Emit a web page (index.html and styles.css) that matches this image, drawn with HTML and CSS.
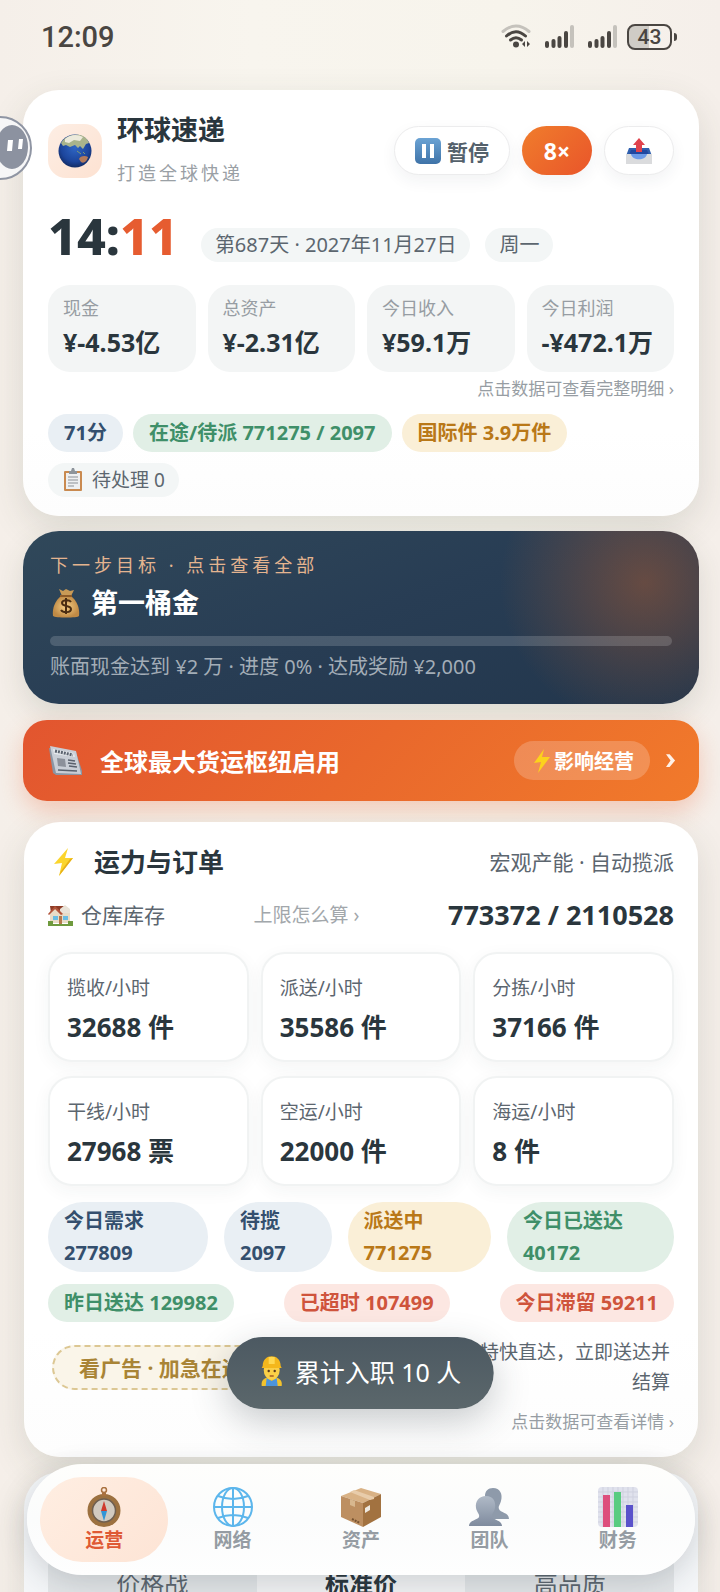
FILE: index.html
```
<!DOCTYPE html>
<html lang="zh-CN">
<head>
    <meta charset="UTF-8">
    <meta name="viewport" content="width=device-width, initial-scale=1.0">
    <title>环球速递</title>
    <link rel="stylesheet" href="styles.css">
</head>
<body>
<div class="app">
    <!-- 状态栏 -->
    <div class="status-bar">
        <span class="status-time">12:09</span>
        <div class="status-icons">
            <svg width="31" height="26" viewBox="0 0 31 26" fill="none" stroke-linecap="round">
                <path d="M2 7.500Q15 -3.500 28 7.500" stroke="#c5c2bc" stroke-width="3"/>
                <path d="M5.500 12Q15 3.500 24.500 12" stroke="#4a4642" stroke-width="3"/>
                <path d="M9.500 16Q15 11.500 20.500 16" stroke="#4a4642" stroke-width="3"/>
                <circle cx="15" cy="20.500" r="3" fill="#4a4642"/>
                <path d="M24 17v6l-3-3zM26 17v6l3-3z" fill="#4a4642"/>
            </svg>
            <svg width="30" height="26" viewBox="0 0 30 26">
                <g fill="#4a4642"><rect y="17" width="4" height="7" rx="2"/><rect x="6.500" y="15" width="4" height="9" rx="2"/><rect x="12.500" y="12" width="4" height="12" rx="2"/><rect x="19" y="7" width="4" height="17" rx="2"/></g>
                <rect x="25" y="1" width="4" height="23" rx="2" fill="#c5c2bc"/>
            </svg>
            <svg width="30" height="26" viewBox="0 0 30 26">
                <g fill="#4a4642"><rect y="17" width="4" height="7" rx="2"/><rect x="6.500" y="15" width="4" height="9" rx="2"/><rect x="12.500" y="12" width="4" height="12" rx="2"/><rect x="19" y="7" width="4" height="17" rx="2"/></g>
                <rect x="25" y="1" width="4" height="23" rx="2" fill="#c5c2bc"/>
            </svg>
            <span class="battery">43</span>
        </div>
    </div>

    <!-- 悬浮助手 -->
    <button class="helper" aria-label="助手">
        <svg width="66" height="66" viewBox="0 0 66 66">
            <circle cx="33" cy="33" r="31" fill="#f6f6f7" stroke="#8f95a3" stroke-width="2"/>
            <ellipse cx="45" cy="32" rx="16" ry="22" fill="#8c92a0"/>
            <path d="M41 25h5l-1 11h-5zM52 24h4l-1 10h-4z" fill="#fff"/>
        </svg>
    </button>

    <!-- 公司概况 -->
    <section class="card">
        <div class="head">
            <div class="logo">
                <svg width="34" height="34" viewBox="0 0 34 34">
                    <defs><radialGradient id="earth" cx=".5" cy=".4" r=".6"><stop offset="0" stop-color="#2f66c4"/><stop offset=".7" stop-color="#1c459c"/><stop offset="1" stop-color="#122c66"/></radialGradient></defs>
                    <circle cx="17" cy="17" r="16.500" fill="url(#earth)"/>
                    <path d="M3 9C7 2 15 0 22 1c5 1 8 5 9 8l-3 1-3 5-3-3-2 2-3-3-5 2-4-2-3 1z" fill="#a9b48c"/>
                    <path d="M7 5c5-5 13-5 18-2l-3 4-6-1-5 3-4-1z" fill="#eceadb"/>
                    <path d="M21 25c1-3 6-4 9-2-1 4-4 7-7 5z" fill="#b27a5c"/>
                    <path d="M19 17l4 3m2-2l2 2" stroke="#7d9a72"/>
                </svg>
            </div>
            <div class="brand">
                <h1>环球速递</h1>
                <p>打造全球快递</p>
            </div>
            <div class="actions">
                <button class="btn btn-pause">
                    <svg width="26" height="26" viewBox="0 0 26 26"><defs><linearGradient id="pause" x2="0" y2="1"><stop stop-color="#6ba3d4"/><stop offset="1" stop-color="#3f73a8"/></linearGradient></defs><rect width="26" height="26" rx="5" fill="url(#pause)"/><path d="M7 6h4v14H7zM15 6h4v14h-4z" fill="#fff"/></svg>
                    暂停
                </button>
                <button class="btn btn-speed">8×</button>
                <button class="btn" aria-label="导出">
                    <svg width="26" height="26" viewBox="0 0 26 26"><path d="M3 10h20l3 8H0z" fill="#2f5fae"/><path d="M5 12h16l2 5H3z" fill="#2148a0"/><path d="M0 16h7c1 4 11 4 12 0h7v10H0z" fill="#dadbdd"/><path d="M5 16h16c-1 7-15 7-16 0z" fill="#6d9be8"/><path d="M13 0l6 7h-3v7h-6V7H7z" fill="#e0434d"/></svg>
                </button>
            </div>
        </div>

        <div class="clock-row">
            <div class="clock">14:<span>11</span></div>
            <span class="tag">第687天 · 2027年11月27日</span>
            <span class="tag">周一</span>
        </div>

        <div class="stats">
            <div class="stat"><span>现金</span><strong>¥-4.53亿</strong></div>
            <div class="stat"><span>总资产</span><strong>¥-2.31亿</strong></div>
            <div class="stat"><span>今日收入</span><strong>¥59.1万</strong></div>
            <div class="stat"><span>今日利润</span><strong>-¥472.1万</strong></div>
        </div>
        <a class="hint" href="#">点击数据可查看完整明细 ›</a>

        <div class="chips">
            <span class="chip blue">71分</span>
            <span class="chip green">在途/待派 771275 / 2097</span>
            <span class="chip yellow">国际件 3.9万件</span>
            <span class="tag todo">
                <svg width="22" height="24" viewBox="0 0 22 24"><rect x="2" y="3" width="18" height="20" rx="1" fill="#c98a50"/><path d="M4 5h14v16H4z" fill="#eef0f2"/><path d="M7 3h2l1-3h2l1 3h2v3H7z" fill="#8d949b"/><path d="M6 9h10M6 12h10M6 15h10M6 18h6" stroke="#8b9096"/></svg>
                待处理 0
            </span>
        </div>
    </section>

    <!-- 下一步目标 -->
    <section class="goal">
        <p class="goal-label">下一步目标 · 点击查看全部</p>
        <h2>
            <svg width="32" height="32" viewBox="0 0 32 32"><defs><radialGradient id="bag"><stop stop-color="#f6cf86"/><stop offset="1" stop-color="#c08a45"/></radialGradient></defs><path d="M9 2l4 2 3-2 4 2 4-1-3 6H12z" fill="#c99a56"/><path d="M11 9h10c6 5 9 12 8 20-1 2-24 2-26 0C2 21 5 14 11 9z" fill="url(#bag)"/><path d="M10 9h12" stroke="#8c5a28" stroke-width="2"/><path d="M21 15c-2-3-9-2-9 1 0 4 9 2 9 6 0 4-8 4-10 1M16 11v16" stroke="#4a2d12" stroke-width="2" fill="none"/></svg>
            第一桶金
        </h2>
        <div class="bar"></div>
        <p class="goal-text">账面现金达到 ¥2 万 · 进度 0% · 达成奖励 ¥2,000</p>
    </section>

    <!-- 新闻 -->
    <section class="news">
        <svg width="34" height="30" viewBox="0 0 34 30"><path d="M0 2l4 25 3 2h26v-4l-6-19z" fill="#8b95a3"/><path d="M1 0l26 5 5 23-25-1z" fill="#c9ced6"/><path d="M4 3l21 4 1 4-21-3z" fill="#e6e9ed"/><path d="M6 5l18 4" stroke="#5c6470" stroke-width="3" stroke-dasharray="2 1"/><path d="M8 12l8 1 1 8-8-1z" fill="#8b909a"/><path d="M19 14l7 1M19 17l8 1M20 20l8 1M9 24l19 1" stroke="#59616d" stroke-width="1.500"/></svg>
        <span class="news-title">全球最大货运枢纽启用</span>
        <span class="impact">
            <svg width="16" height="24" viewBox="0 0 16 24"><path d="M10 0L0 14l7-1-3 11L16 8H8z" fill="#fcd21c"/></svg>
            影响经营
        </span>
        <svg class="arrow" width="10" height="14" viewBox="0 0 11 15"><path d="M0 0h4l6 7-6 7H0l5-7z" fill="#fff1e8"/></svg>
    </section>

    <!-- 运力与订单 -->
    <section class="card capacity">
        <div class="capacity-head">
            <svg width="34" height="30" viewBox="0 0 34 30"><path d="M20 1L6 17l8-1-3 13L25 11h-8z" fill="#fbd52c"/><path d="M25 11L11 29l2-5 9-12z" fill="#e6ae18"/></svg>
            <h2>运力与订单</h2>
            <span>宏观产能 · 自动揽派</span>
        </div>
        <div class="stock">
            <span class="stock-name">
                <svg width="25" height="22" viewBox="0 0 25 22"><path d="M2 2h15l5 7H3z" fill="#8e3b26"/><path d="M12 5l5-4 5 4v5H12z" fill="#e9e3d8"/><path d="M2 9l6-5 6 5h8v10H2z" fill="#e8dcc7"/><path d="M0 10l7-8 8 8-2 1-6-6-6 6z" fill="#b2543a"/><path d="M5 12h5v4H5zM15 12h5v4h-5z" fill="#69bde3"/><path d="M11 12h3v8h-3z" fill="#b57a4d"/><path d="M0 17h5v3h15v-3h5v5H0z" fill="#6f9a3e"/></svg>
                仓库库存
            </span>
            <a class="stock-help" href="#">上限怎么算 ›</a>
            <strong>773372 / 2110528</strong>
        </div>

        <div class="rates">
            <div class="rate"><span>揽收/小时</span><strong>32688 件</strong></div>
            <div class="rate"><span>派送/小时</span><strong>35586 件</strong></div>
            <div class="rate"><span>分拣/小时</span><strong>37166 件</strong></div>
            <div class="rate"><span>干线/小时</span><strong>27968 票</strong></div>
            <div class="rate"><span>空运/小时</span><strong>22000 件</strong></div>
            <div class="rate"><span>海运/小时</span><strong>8 件</strong></div>
        </div>

        <div class="order-row">
            <span class="chip blue">今日需求 277809</span>
            <span class="chip blue">待揽 2097</span>
            <span class="chip yellow">派送中 771275</span>
            <span class="chip green">今日已送达 40172</span>
        </div>
        <div class="order-row">
            <span class="chip green">昨日送达 129982</span>
            <span class="chip red">已超时 107499</span>
            <span class="chip red">今日滞留 59211</span>
        </div>

        <div class="ad-row">
            <button class="ad-btn">看广告 · 加急在途</button>
            <p>特快直达，立即送达并结算</p>
        </div>
        <a class="hint" href="#">点击数据可查看详情 ›</a>
    </section>

    <!-- 定价 -->
    <section class="card pricing">
        <div class="segments">
            <button>价格战</button>
            <button class="selected">标准价</button>
            <button>高品质</button>
        </div>
    </section>

    <!-- 提示 -->
    <div class="toast" role="status">
        <svg width="22" height="30" viewBox="0 0 22 30"><path d="M1 30c-1-6 3-9 10-9s11 3 10 9z" fill="#f3c22c"/><path d="M5 30l1-8 5 3 5-3 1 8z" fill="#4c94dd"/><ellipse cx="11" cy="14" rx="8" ry="10" fill="#fbcf47"/><path d="M2 10c0-13 18-13 18 0l1 2H1z" fill="#f4b71c"/><path d="M8 1h6v7H8z" fill="#ffd850"/><circle cx="8" cy="15" r="1.200" fill="#5a3a1c"/><circle cx="14" cy="15" r="1.200" fill="#5a3a1c"/><path d="M9 20h4" stroke="#a35a24" stroke-width="1.500"/></svg>
        累计入职 10 人
    </div>

    <!-- 底部导航 -->
    <nav class="nav">
        <a class="active" href="#">
            <svg width="40" height="40" viewBox="0 0 40 40"><circle cx="20" cy="3" r="2.500" fill="none" stroke="#a9713f" stroke-width="1.500"/><circle cx="20" cy="23.500" r="14" fill="#d2cac0" stroke="#9c7140" stroke-width="5"/><circle cx="20" cy="23.500" r="11.500" fill="none" stroke="#6f5f50" stroke-width="1.500"/><path d="M18 6h4v3h-4z" fill="#a9713f"/><path d="M20 14l3 10h-6z" fill="#cf3a2e"/><path d="M20 34l3-10h-6z" fill="#3295d6"/></svg>
            运营
        </a>
        <a href="#">
            <svg width="40" height="40" viewBox="0 0 40 40" fill="none" stroke="#5cb6ec" stroke-width="2"><circle cx="20" cy="20" r="19"/><ellipse cx="20" cy="20" rx="11" ry="19"/><path d="M20 1v38M1 20h38M5 9q15 6 30 0M5 31q15-6 30 0"/></svg>
            网络
        </a>
        <a href="#">
            <svg width="40" height="40" viewBox="0 0 40 40"><path d="M0 9L20 1l20 6-18 9z" fill="#d9b285"/><path d="M0 9l22 7v24L0 30z" fill="#bd8f61"/><path d="M22 16l18-9v23L22 40z" fill="#a27240"/><path d="M9 5l4-2 20 7v2l-4 1z" fill="#e8ccaa"/><path d="M9 12l5 2v6l-5-2z" fill="#d8b78e"/><path d="M24 21l5-3v5l-5 3z" fill="#eee9e0"/><path d="M11 32l8 4" stroke="#765230" stroke-width="2" stroke-dasharray="2 1"/></svg>
            资产
        </a>
        <a href="#">
            <svg width="40" height="40" viewBox="0 0 40 40"><defs><linearGradient id="bust" x2="0" y2="1"><stop stop-color="#b0bac7"/><stop offset="1" stop-color="#7f8b9e"/></linearGradient></defs><path d="M24 1c7 0 10 6 8 13-1 4-3 5-2 8 1 4 10 3 10 10H20L16 9c0-5 3-8 8-8z" fill="#8e9aaa"/><path d="M17 9c7 0 10 5 9 12-1 5-4 6-3 9s10 3 10 9H0c0-6 9-6 10-9s-2-4-3-9C6 14 10 9 17 9z" fill="url(#bust)"/></svg>
            团队
        </a>
        <a href="#">
            <svg width="40" height="40" viewBox="0 0 40 40"><rect width="40" height="40" rx="4" fill="#e0e2ed"/><path d="M5 0v40M10 0v40M15 0v40M20 0v40M25 0v40M30 0v40M35 0v40M0 5h40M0 10h40M0 15h40M0 20h40M0 25h40M0 30h40M0 35h40" stroke="#cfd1df"/><path d="M5 8h7v32H5z" fill="#dd4f7d"/><path d="M16 5h7v35h-7z" fill="#59cc80"/><path d="M28 18h7v22h-7z" fill="#5a52cb"/></svg>
            财务
        </a>
    </nav>
</div>
</body>
</html>
```
FILE: styles.css
```
/* 全局 */
* {
    box-sizing: border-box;
}

body {
    margin: 0;
    font-family: "Noto Sans", "Noto Sans CJK SC", sans-serif;
    color: #2a363d;
    background-color: #f5f1ea;
}

h1, h2, p {
    margin: 0;
}

a {
    text-decoration: none;
}

button {
    font-family: inherit;
    border: none;
    cursor: pointer;
}

svg {
    flex-shrink: 0;
}

.app {
    position: relative;
    height: 100vh;
    overflow: hidden;
    padding: 0 21px 0 23px;
    background: linear-gradient(90deg, #f5efe9, #f8f5ee 35%, #f7f4ec 70%, #f5efea);
}

/* 状态栏 */
.status-bar {
    display: flex;
    justify-content: space-between;
    align-items: center;
    height: 90px;
    padding: 0 27px 16px 18px;
}

.status-time {
    font-family: Roboto, sans-serif;
    font-size: 29px;
    font-weight: 500;
    color: #4a4642;
}

.status-icons {
    display: flex;
    align-items: center;
    gap: 13px;
}

.battery {
    position: relative;
    width: 45px;
    height: 26px;
    margin-left: -4px;
    border: 2px solid #4a4642;
    border-radius: 8px;
    background: linear-gradient(90deg, #cfccc6 48%, transparent 48%);
    font-family: Roboto, sans-serif;
    font-size: 21px;
    font-weight: 500;
    line-height: 23px;
    text-align: center;
    color: #4a4642;
}

.battery::after {
    content: "";
    position: absolute;
    right: -7px;
    top: 7px;
    width: 3px;
    height: 8px;
    border-radius: 0 3px 3px 0;
    background-color: #4a4642;
}

/* 悬浮助手 */
.helper {
    position: absolute;
    left: -33px;
    top: 115px;
    z-index: 2;
    padding: 0;
    background: none;
    line-height: 0;
}

/* 卡片 */
.card {
    padding: 24px 25px 19px;
    border-radius: 36px;
    background: linear-gradient(#fff, #fff 80%, #fdfdfd);
    box-shadow: 0 12px 36px rgba(60, 62, 50, 0.14);
}

.head {
    display: flex;
    align-items: center;
}

.logo {
    display: flex;
    justify-content: center;
    align-items: center;
    width: 54px;
    height: 54px;
    border-radius: 18px;
    background: linear-gradient(135deg, #fdeee4, #fde2d2);
}

.brand {
    margin-left: 15px;
}

.brand h1 {
    font-size: 27px;
    line-height: 32px;
}

.brand p {
    margin-top: 13px;
    font-size: 18px;
    line-height: 28px;
    letter-spacing: 3px;
    color: #9aa0a5;
}

.actions {
    display: flex;
    align-items: center;
    gap: 12px;
    margin-left: auto;
}

.btn {
    display: flex;
    justify-content: center;
    align-items: center;
    gap: 6px;
    height: 49px;
    min-width: 70px;
    padding: 0 20px;
    border: 1px solid #ececed;
    border-radius: 25px;
    background-color: #fff;
    box-shadow: 0 6px 16px rgba(40, 50, 60, 0.06);
    font-size: 21px;
    font-weight: 700;
    color: #54616b;
}

.btn-speed {
    padding: 0 16px;
    border: none;
    background: linear-gradient(135deg, #f07d2c, #e9552a);
    font-size: 23px;
    color: #fff;
}

/* 时间 */
.clock-row {
    display: flex;
    align-items: flex-end;
    gap: 15px;
    margin-top: 23px;
}

.clock {
    margin-right: 8px;
    font-size: 50px;
    font-weight: 800;
    line-height: 52px;
}

.clock span {
    color: #e65c30;
}

.tag {
    padding: 0 14px;
    border-radius: 17px;
    background-color: #f3f6f6;
    font-size: 20px;
    line-height: 34px;
    color: #5c666f;
}

/* 资金数据 */
.stats {
    display: grid;
    grid-template-columns: repeat(4, 1fr);
    gap: 12px;
    margin-top: 23px;
}

.stat {
    padding: 10px 0 13px 15px;
    border-radius: 22px;
    background-color: #f3f5f5;
    white-space: nowrap;
}

.stat span {
    display: block;
    font-size: 18px;
    line-height: 26px;
    color: #979da3;
}

.stat strong {
    display: block;
    margin-top: 4px;
    font-size: 25px;
    line-height: 34px;
}

.hint {
    display: block;
    margin-top: 4px;
    font-size: 17px;
    line-height: 26px;
    text-align: right;
    color: #979da3;
}

.chips {
    display: flex;
    flex-wrap: wrap;
    gap: 11px 10px;
    margin-top: 12px;
}

.chip {
    padding: 3px 16px;
    border-radius: 35px;
    font-size: 20px;
    font-weight: 700;
    line-height: 32px;
}

.blue {
    background-color: #e9eff4;
    color: #344f6e;
}

.green {
    background-color: #e1efe6;
    color: #3f8f69;
}

.yellow {
    background-color: #faefd7;
    color: #b97818;
}

.red {
    background-color: #fce7e2;
    color: #cf543c;
}

.todo {
    display: flex;
    align-items: center;
    gap: 8px;
    font-size: 19px;
}

/* 下一步目标 */
.goal {
    margin-top: 15px;
    padding: 20px 27px 23px;
    border-radius: 36px;
    background:
        radial-gradient(circle 145px at 92% 30%, rgba(226, 106, 38, 0.34), transparent),
        linear-gradient(160deg, #30485a, #283d54 50%, #22364c);
    box-shadow: 0 12px 30px rgba(60, 62, 50, 0.14);
}

.goal-label {
    font-size: 18px;
    line-height: 28px;
    letter-spacing: 4px;
    color: #e4b48f;
}

.goal h2 {
    display: flex;
    align-items: center;
    gap: 9px;
    margin-top: 6px;
    font-size: 27px;
    line-height: 36px;
    color: #fff;
}

.bar {
    height: 10px;
    margin-top: 15px;
    border-radius: 5px;
    background-color: rgba(255, 255, 255, 0.16);
}

.goal-text {
    margin-top: 7px;
    font-size: 20px;
    line-height: 28px;
    color: #a3adb7;
}

/* 新闻 */
.news {
    display: flex;
    align-items: center;
    height: 81px;
    margin-top: 16px;
    padding: 0 23px 0 26px;
    border-radius: 24px;
    background: linear-gradient(135deg, #e2552f, #e9682c 50%, #f17a2b);
    box-shadow: 0 10px 24px rgba(232, 95, 45, 0.28);
    font-weight: 700;
    color: #fff;
}

.news-title {
    margin-left: 17px;
    font-size: 24px;
}

.impact {
    display: flex;
    align-items: center;
    gap: 4px;
    height: 39px;
    margin-left: auto;
    padding: 0 16px 0 20px;
    border-radius: 20px;
    background-color: rgba(255, 255, 255, 0.2);
    font-size: 20px;
}

.arrow {
    margin-left: 16px;
}

/* 运力与订单 */
.capacity {
    margin: 21px 1px 0;
    padding: 23px 24px 22px;
}

.capacity-head {
    display: flex;
    align-items: center;
    line-height: 34px;
}

.capacity-head h2 {
    margin-left: 12px;
    font-size: 26px;
}

.capacity-head span {
    margin-left: auto;
    font-size: 21px;
    color: #5c666f;
}

.stock {
    display: flex;
    justify-content: space-between;
    align-items: center;
    margin-top: 19px;
    line-height: 34px;
}

.stock-name {
    display: flex;
    align-items: center;
    gap: 8px;
    font-size: 21px;
    color: #5c666f;
}

.stock-help {
    font-size: 19px;
    color: #a2a7ab;
}

.stock strong {
    font-size: 27px;
}

.rates {
    display: grid;
    grid-template-columns: repeat(3, 1fr);
    gap: 14px 12px;
    margin-top: 20px;
}

.rate {
    padding: 20px 17px 16px;
    border: 2px solid #f1f3f3;
    border-radius: 24px;
    background-color: #fff;
    box-shadow: 0 5px 18px rgba(40, 60, 60, 0.05);
}

.rate span {
    display: block;
    font-size: 19px;
    line-height: 28px;
    color: #5c666f;
}

.rate strong {
    display: block;
    margin-top: 8px;
    font-size: 26px;
    line-height: 34px;
}

.order-row {
    display: flex;
    justify-content: space-between;
    gap: 16px;
    margin-top: 16px;
}

.order-row + .order-row {
    margin-top: 12px;
}

.ad-row {
    display: flex;
    justify-content: space-between;
    align-items: center;
    margin-top: 15px;
    padding: 0 4px;
}

.ad-btn {
    height: 45px;
    padding: 0 25px;
    border: 2px dashed #dcc793;
    border-radius: 23px;
    background-color: #faf5e9;
    font-size: 21px;
    font-weight: 700;
    color: #a98436;
}

.ad-row p {
    max-width: 200px;
    font-size: 19px;
    line-height: 30px;
    text-align: right;
    color: #5c666f;
}

.ad-row + .hint {
    margin-top: 12px;
}

/* 定价 */
.pricing {
    margin: 15px 1px 0;
    padding: 70px 24px 24px;
    background: #f4f6f8;
}

.segments {
    display: grid;
    grid-template-columns: repeat(3, 1fr);
    border-radius: 24px;
    background-color: #e3e6e8;
}

.segments button {
    height: 80px;
    border-radius: 20px;
    background: none;
    font-size: 24px;
    color: #5c666f;
}

.segments .selected {
    background-color: #f3f4f5;
    font-weight: 700;
    color: #2a363d;
}

/* 提示 */
.toast {
    position: absolute;
    bottom: 183px;
    left: 50%;
    transform: translateX(-50%);
    display: flex;
    align-items: center;
    gap: 12px;
    height: 72px;
    padding: 0 32px 4px 34px;
    border-radius: 36px;
    background: linear-gradient(#4c5962, #5b676b);
    box-shadow: 0 12px 36px rgba(40, 50, 60, 0.25);
    font-size: 25px;
    white-space: nowrap;
    color: #fff;
}

/* 底部导航 */
.nav {
    position: absolute;
    bottom: 17px;
    left: 27px;
    right: 25px;
    display: flex;
    padding: 13px;
    border-radius: 56px;
    background: linear-gradient(#fefefc, #fbfcfc 50%, #fefefe);
    box-shadow: 0 8px 30px rgba(40, 50, 60, 0.18);
}

.nav a {
    flex: 1;
    display: flex;
    flex-direction: column;
    align-items: center;
    padding: 10px 0 9px;
    border-radius: 42px;
    font-size: 19px;
    font-weight: 700;
    line-height: 26px;
    color: #959ca3;
}

.nav .active {
    background: linear-gradient(135deg, #ffeee2, #fde4d5);
    color: #df5a35;
}
```
